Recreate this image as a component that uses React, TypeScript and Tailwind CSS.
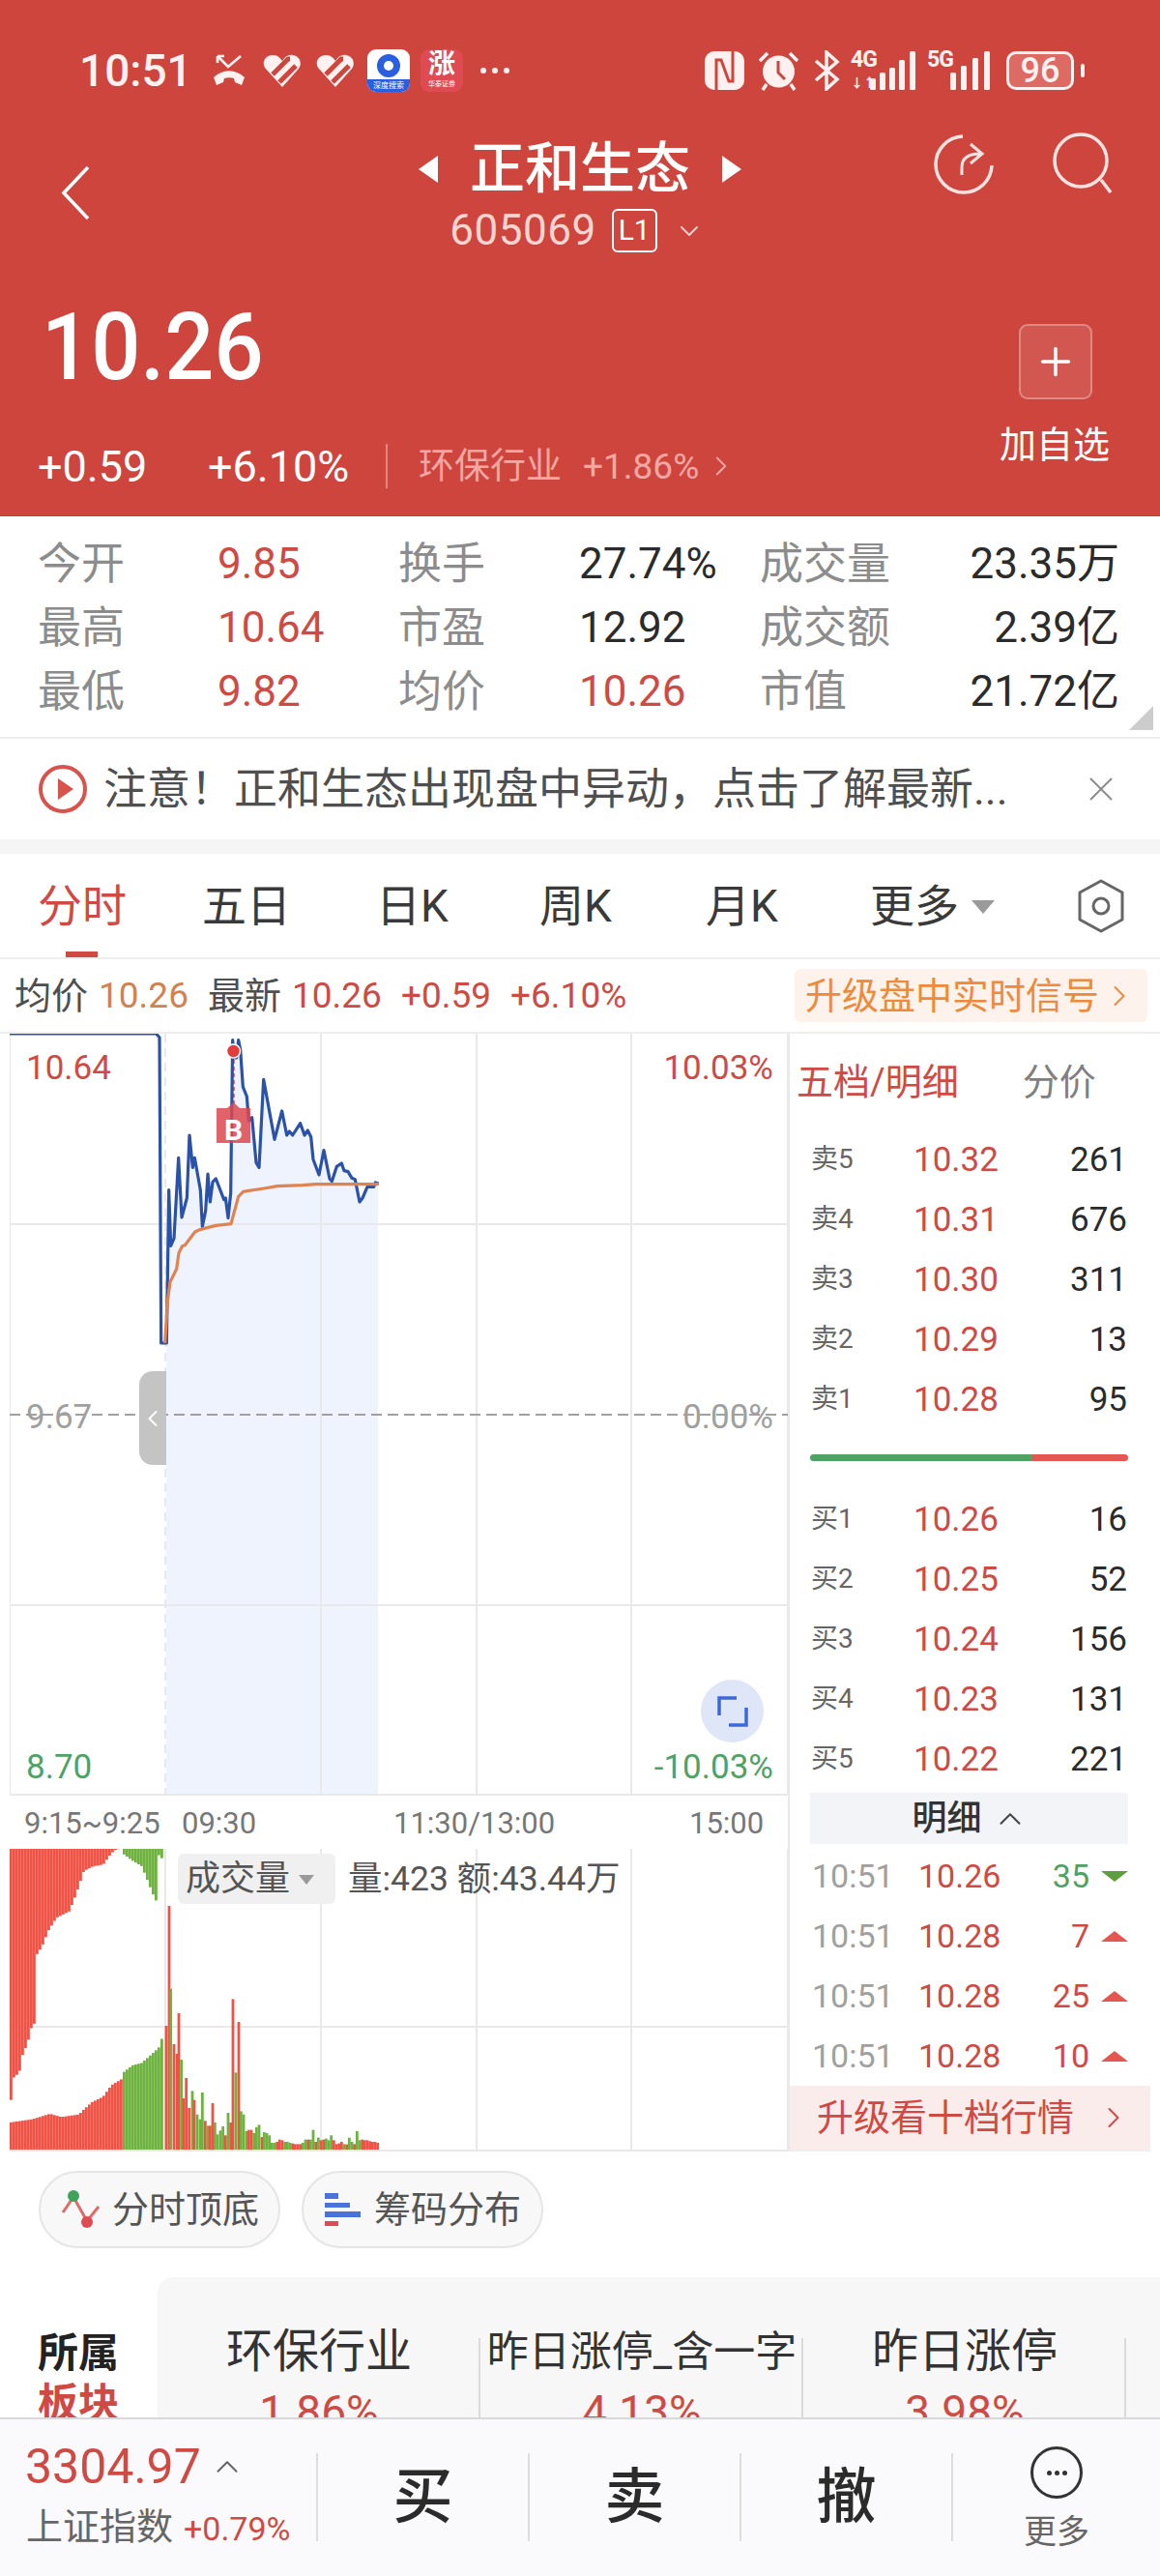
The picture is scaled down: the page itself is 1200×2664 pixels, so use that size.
import React from 'react';
import { ChevronLeft, ChevronRight, ChevronDown, ChevronUp, Plus, X } from 'lucide-react';

// chart coordinates were read off zoomed crops, (x, y) in crop pixels
const toPage = (pts: number[][]) => pts.map(([x, y]) => [140 + x / 3, 1060 + y / 3]);
const str = (pts: number[][]) => pts.map((p) => p.join(',')).join(' ');

const priceLine = toPage([
  [-390, 30], [65, 30], [75, 42], [80, 990], [97, 990], [104, 515], [110, 688], [120, 665], [134, 415], [144, 600],
  [160, 540], [168, 345], [178, 445], [184, 415], [202, 515], [208, 628], [218, 580], [225, 465], [232, 552], [240, 490],
  [250, 480], [275, 545], [280, 540], [288, 602], [296, 525], [302, 50], [308, 105], [314, 105], [320, 50], [326, 80], [334, 195],
  [346, 225], [352, 300], [362, 290], [375, 430], [384, 445], [398, 172], [432, 358], [455, 270], [470, 345], [478, 333],
  [488, 345], [512, 308], [525, 345], [535, 330], [545, 350], [552, 420], [570, 468], [585, 392], [603, 480], [610, 488],
  [625, 442], [640, 432], [648, 455], [660, 458], [672, 478], [682, 482], [696, 552], [705, 540], [720, 505], [740, 505],
  [745, 492], [755, 495],
]);
const avgLine = toPage([
  [92, 990], [100, 860], [108, 800], [128, 760], [135, 710], [145, 690], [155, 685], [185, 645], [200, 638], [250, 625],
  [297, 620], [305, 590], [320, 535], [335, 520], [400, 510], [440, 503], [520, 500], [560, 497], [755, 497],
]);

const interp = (env: number[][], x: number) => {
  for (let i = 1; i < env.length; i++) {
    if (x <= env[i][0]) {
      const [x0, y0] = env[i - 1];
      const [x1, y1] = env[i];
      return y0 + ((y1 - y0) * (x - x0)) / (x1 - x0);
    }
  }
  return env[env.length - 1][1];
};

const topEnv = [[30, 815], [36, 815], [38, 750], [60, 730], [70, 675], [85, 640], [100, 580], [108, 578], [110, 370], [130, 340], [150, 290], [175, 250], [215, 230], [235, 180], [260, 105], [290, 90], [320, 85], [345, 50], [360, 38], [378, 35], [380, 50], [410, 72], [440, 90], [460, 140], [480, 190], [490, 205], [492, 50], [498, 85], [505, 50]];
const bottomEnv = [[30, 885], [100, 875], [155, 858], [190, 868], [245, 860], [260, 845], [285, 822], [320, 805], [345, 770], [378, 750], [380, 732], [410, 708], [440, 700], [480, 665], [495, 650], [505, 615]];

// one bar every 3px in the pre-market part
const preBars = Array.from({ length: 53 }, (_, i) => 10 + i * 3);

const volBars: [number, string, number][] = [
  [516, 'r', 585], [525, 'r', 213], [530, 'g', 470], [540, 'r', 642], [550, 'r', 672], [555, 'r', 546], [563, 'g', 690], [570, 'r', 810], [578, 'r', 747], [587, 'r', 840],
  [597, 'g', 787], [603, 'r', 815], [612, 'g', 860], [621, 'g', 875], [628, 'g', 792], [637, 'r', 880], [645, 'g', 895], [652, 'r', 895], [660, 'r', 825], [667, 'g', 885],
  [675, 'g', 922], [684, 'g', 910], [692, 'g', 897], [700, 'r', 925], [708, 'g', 855], [716, 'r', 885], [723, 'r', 502], [732, 'g', 730], [741, 'r', 573], [748, 'g', 850],
  [756, 'g', 860], [765, 'g', 912], [772, 'r', 908], [780, 'r', 908], [788, 'g', 918], [796, 'g', 900], [804, 'g', 892], [813, 'r', 930], [820, 'g', 915], [828, 'g', 918],
  [836, 'g', 925], [844, 'g', 948], [852, 'g', 948], [860, 'r', 945], [868, 'r', 938], [876, 'r', 940], [884, 'g', 945], [892, 'g', 945], [900, 'g', 948], [908, 'r', 950],
  [916, 'r', 952], [924, 'r', 952], [932, 'r', 952], [940, 'g', 948], [948, 'g', 938], [956, 'r', 938], [964, 'g', 938], [972, 'g', 908], [980, 'r', 945], [988, 'g', 932],
  [996, 'r', 940], [1004, 'r', 938], [1012, 'g', 935], [1020, 'g', 940], [1028, 'g', 925], [1036, 'r', 940], [1044, 'r', 952], [1052, 'r', 950], [1060, 'r', 945], [1068, 'g', 952],
  [1076, 'r', 953], [1084, 'g', 932], [1092, 'g', 945], [1100, 'r', 952], [1108, 'g', 912], [1116, 'g', 940], [1124, 'r', 938], [1132, 'r', 940], [1140, 'r', 940], [1148, 'r', 943],
  [1156, 'r', 945], [1164, 'r', 945], [1172, 'r', 948],
];

const RED = '#F05245';
const GREEN = '#6EB23F';

const stats = [
  ['今开', '9.85', '换手', '27.74%', '成交量', '23.35万'],
  ['最高', '10.64', '市盈', '12.92', '成交额', '2.39亿'],
  ['最低', '9.82', '均价', '10.26', '市值', '21.72亿'],
];

const sells = [['卖5', '10.32', '261'], ['卖4', '10.31', '676'], ['卖3', '10.30', '311'], ['卖2', '10.29', '13'], ['卖1', '10.28', '95']];
const buys = [['买1', '10.26', '16'], ['买2', '10.25', '52'], ['买3', '10.24', '156'], ['买4', '10.23', '131'], ['买5', '10.22', '221']];
const ticks = [['10.26', '35', true], ['10.28', '7', false], ['10.28', '25', false], ['10.28', '10', false]] as const;

const StatusLeft = () => (
  <div className="flex items-center">
    <span className="ml-[82px] w-[135px] text-[46px] font-medium leading-none text-[#FFF1EF]">10:51</span>
    <svg width="40" height="34" viewBox="0 0 40 34" className="shrink-0">
      <path d="M4 16 C14 7 26 7 36 16 L33 24 L26 21 L25 17 C22 16 18 16 15 17 L14 21 L7 24 Z" fill="#FFF1EF" transform="translate(0 8)" />
      <path d="M8 2 L19 13 L32 2 M8 2 H15 M8 2 V9" fill="none" stroke="#FFF1EF" strokeWidth="2.6" />
    </svg>
    {[0, 1].map((i) => (
      <svg key={i} width="40" height="36" viewBox="0 0 40 36" className="ml-[15px] shrink-0">
        <path d="M20 35 L2 15 C-2 8 4 1 11 2 C15 2 18 5 20 8 C23 3 27 1 31 2 C38 3 41 10 37 16 Z" fill="#FFF1EF" />
        <path d="M10 22 L26 6 L28 6 M17 30 L34 13" stroke="#CE453E" strokeWidth="5" fill="none" />
      </svg>
    ))}
    <div className="relative ml-[13px] flex h-[44px] w-[44px] flex-col items-center overflow-hidden rounded-[9px] bg-white">
      <div className="mt-[5px] h-[24px] w-[24px] rounded-full border-[7px] border-[#2A5FE0]" />
      <div className="absolute bottom-0 flex h-[13px] w-full items-center justify-center bg-[#2A5FE0] text-[8px] leading-none whitespace-nowrap text-white">深度搜索</div>
    </div>
    <div className="ml-[11px] flex h-[44px] w-[44px] flex-col items-center rounded-[9px] bg-[#DF4B52] text-white">
      <span className="text-[28px] leading-[32px] font-bold">涨</span>
      <span className="text-[7px] leading-[8px] whitespace-nowrap">华泰证券</span>
    </div>
    <div className="ml-[18px] flex gap-[6px]">
      <span className="h-[6px] w-[6px] rounded-full bg-[#FFF1EF]" />
      <span className="h-[6px] w-[6px] rounded-full bg-[#FFF1EF]" />
      <span className="h-[6px] w-[6px] rounded-full bg-[#FFF1EF]" />
    </div>
  </div>
);

const Signal = ({ label, arrows }: { label: string; arrows?: boolean }) => (
  <div className="relative h-[40px] w-[68px] shrink-0">
    <span className="absolute top-[-3px] left-0 text-[23px] leading-[24px] font-bold tracking-[-1px] text-[#FFF1EF]">{label}</span>
    {arrows && <span className="absolute bottom-[1px] left-0 text-[13px] leading-none font-bold text-[#FFF1EF]">↓↑</span>}
    <svg width="68" height="40" viewBox="0 0 68 40" className="absolute inset-0">
      {(arrows
        ? [[20, 28, 6, 12], [30, 22, 6, 18], [40, 17, 6, 23], [50, 9, 6, 31], [61, 0, 6, 40]]
        : [[24, 22, 6, 18], [35, 15, 6, 25], [47, 7, 6, 33], [59, 0, 6, 40]]
      ).map(([x, y, w, h]) => (
        <rect key={x} x={x} y={y} width={w} height={h} rx="1.5" fill="#FFF1EF" />
      ))}
    </svg>
  </div>
);

const StatusRight = () => (
  <div className="flex items-center">
    <svg width="41" height="40" viewBox="0 0 41 40" className="shrink-0">
      <rect width="41" height="40" rx="10" fill="#FFF1EF" />
      <path d="M12 40 V9 H17 L25 31 H29 V0" fill="none" stroke="#CE453E" strokeWidth="3" />
    </svg>
    <svg width="41" height="42" viewBox="0 0 41 42" className="ml-[15px] shrink-0">
      <circle cx="20.5" cy="22" r="16.5" fill="#FFF1EF" />
      <path d="M20 11 V23 L27 30" fill="none" stroke="#CE453E" strokeWidth="3" />
      <path d="M1 11 L9 3 M40 11 L32 3 M8 35 L4 41 M33 35 L37 41" stroke="#FFF1EF" strokeWidth="3.5" />
    </svg>
    <svg width="28" height="42" viewBox="0 0 28 42" className="ml-[15px] shrink-0">
      <path d="M3 11 L25 30 L14 40 V2 L25 12 L3 31" fill="none" stroke="#FFF1EF" strokeWidth="3.5" />
    </svg>
    <div className="ml-[11px]">
      <Signal label="4G" arrows />
    </div>
    <div className="ml-[11px]">
      <Signal label="5G" />
    </div>
    <div className="ml-[14px] flex h-[40px] w-[70px] items-center justify-center rounded-[10px] border-[3px] border-[#FFF1EF] bg-[#DE6A64] text-[36px] leading-none font-medium text-[#FFF1EF]">
      96
    </div>
    <div className="ml-[7px] h-[14px] w-[4px] rounded-full bg-[#FFF1EF]" />
  </div>
);

const Header = () => (
  <div className="flex h-[534px] flex-col bg-[#CE453E] text-white">
    <div className="mt-[47px] flex h-[52px] items-center justify-between pr-[78px]">
      <StatusLeft />
      <StatusRight />
    </div>
    <div className="relative mt-[40px] flex h-[125px] flex-col items-center">
      <svg width="31" height="57" viewBox="0 0 31 57" className="absolute top-[32px] left-[63px]" fill="none" stroke="#FFFFFF" strokeWidth="3.5">
        <path d="M28 2 L3 28.5 L28 55" />
      </svg>
      <div className="flex items-center">
        <span className="h-0 w-0 border-y-[14px] border-r-[20px] border-y-transparent border-r-white" />
        <span className="mx-[33px] text-[57px] leading-[72px] font-medium">正和生态</span>
        <span className="h-0 w-0 border-y-[14px] border-l-[20px] border-y-transparent border-l-white" />
      </div>
      <div className="mt-[4px] ml-[-6px] flex items-center text-[#FBD5D1]">
        <span className="text-[44px] leading-[46px] tracking-[0.5px]">605069</span>
        <span className="ml-[16px] flex h-[45px] w-[47px] items-center justify-center rounded-[6px] border-2 border-white text-[30px] leading-none text-white">L1</span>
        <ChevronDown className="mt-[2px] ml-[17px] text-[#FBD5D1]" size={32} strokeWidth={1.8} absoluteStrokeWidth />
      </div>
      <svg width="64" height="66" viewBox="0 0 64 66" className="absolute top-[-2px] left-[966px]" fill="none" stroke="#FBE3E1" strokeWidth="3.5">
        <path d="M30 4 A29 29 0 1 0 60 34" />
        <path d="M29 44 V36 C29 26 36 22 48 22 M38 12 L50 22 L38 32" strokeWidth="3" />
      </svg>
      <svg width="64" height="66" viewBox="0 0 64 66" className="absolute top-[-3px] left-[1089px]" fill="none" stroke="#FBE3E1" strokeWidth="3.5">
        <circle cx="29" cy="30" r="27" />
        <path d="M50 50 L60 63" />
      </svg>
    </div>
    <div className="relative flex-1">
      <span className="absolute top-[45px] left-[43px] origin-bottom scale-y-[1.08] text-[90px] leading-[110px] font-medium">10.26</span>
      <div className="absolute top-[71px] left-[1054px] flex h-[78px] w-[76px] items-center justify-center rounded-[9px] border-2 border-white/30 bg-white/10">
        <Plus size={46} strokeWidth={3.5} absoluteStrokeWidth />
      </div>
      <span className="absolute top-[171px] left-[1034px] text-[38px] leading-[50px]">加自选</span>
      <div className="absolute top-[195px] left-[39px] flex h-[46px] items-center">
        <span className="w-[176px] text-[45px] leading-none">+0.59</span>
        <span className="w-[184px] text-[45px] leading-none">+6.10%</span>
        <span className="h-[46px] w-[2px] bg-[#E58882]" />
        <span className="ml-[32px] text-[37px] leading-none text-[#F3A7A2]">环保行业</span>
        <span className="ml-[22px] text-[37px] leading-none text-[#F3A7A2]">+1.86%</span>
        <ChevronRight className="ml-[6px] text-[#F3A7A2]" size={34} strokeWidth={1.8} absoluteStrokeWidth />
      </div>
    </div>
  </div>
);

const Stats = () => (
  <div className="relative h-[230px] border-b-2 border-[#EEEEEE] bg-white pt-[16px]">
    {stats.map((r) => (
      <div key={r[0]} className="grid h-[66px] grid-cols-[186px_187px_187px_187px_auto_1fr] items-center pr-[42px] pl-[39px] text-[44px] leading-none">
        <span className="text-[45px] text-[#8C8C8C]">{r[0]}</span>
        <span className="text-[#D04A44]">{r[1]}</span>
        <span className="text-[45px] text-[#8C8C8C]">{r[2]}</span>
        <span className={r[3] === '10.26' ? 'text-[#D04A44]' : 'text-[#2B2B2B]'}>{r[3]}</span>
        <span className="text-[45px] text-[#8C8C8C]">{r[4]}</span>
        <span className="text-right text-[#2B2B2B]">{r[5]}</span>
      </div>
    ))}
    <span className="absolute right-[7px] bottom-[7px] h-0 w-0 border-b-[25px] border-l-[25px] border-b-[#CCCCCC] border-l-transparent" />
  </div>
);

const Notice = () => (
  <div className="flex h-[104px] items-center bg-white pl-[40px]">
    <span className="flex h-[50px] w-[50px] items-center justify-center rounded-full border-[4px] border-[#D9534D]">
      <span className="ml-[5px] h-0 w-0 border-y-[11px] border-l-[16px] border-y-transparent border-l-[#D9534D]" />
    </span>
    <span className="ml-[17px] w-[975px] text-[45px] leading-none whitespace-nowrap text-[#4F4F4F]">注意！正和生态出现盘中异动，点击了解最新...</span>
    <X className="ml-[36px] text-[#8C8C8C]" size={42} strokeWidth={2} absoluteStrokeWidth />
  </div>
);

const Tabs = () => (
  <div className="relative flex h-[109px] items-center border-b-2 border-[#EEEEEE] bg-white text-[46px] leading-none text-[#3A3A3A]">
    <span className="absolute left-[39px] text-[#D04A44]">分时</span>
    <span className="absolute top-[101px] left-[68px] h-[6px] w-[33px] bg-[#D04A44]" />
    <span className="absolute left-[209px]">五日</span>
    <span className="absolute left-[389px]">日K</span>
    <span className="absolute left-[558px]">周K</span>
    <span className="absolute left-[730px]">月K</span>
    <span className="absolute left-[900px]">更多</span>
    <span className="absolute left-[1005px] mt-[2px] h-0 w-0 border-x-[12px] border-t-[14px] border-x-transparent border-t-[#9A9A9A]" />
    <svg width="50" height="56" viewBox="0 0 50 56" className="absolute left-[1114px]" fill="none" stroke="#666" strokeWidth="3">
      <path d="M25 2 L47 14 V42 L25 54 L3 42 V14 Z" strokeLinejoin="round" />
      <circle cx="25" cy="28" r="8" />
    </svg>
  </div>
);

const InfoLine = () => (
  <div className="flex h-[77px] items-center border-b-2 border-[#EEEEEE] bg-white pl-[15px] text-[37px] leading-none whitespace-nowrap">
    <span className="text-[38px] text-[#4F4F4F]">均价</span>
    <span className="ml-[11px] text-[#D2824F]">10.26</span>
    <span className="ml-[20px] text-[38px] text-[#4F4F4F]">最新</span>
    <span className="ml-[11px] text-[#D04A44]">10.26</span>
    <span className="ml-[20px] text-[#D04A44]">+0.59</span>
    <span className="ml-[20px] text-[#D04A44]">+6.10%</span>
    <div className="mr-[13px] ml-auto flex h-[55px] w-[365px] items-center rounded-[6px] bg-[#FDF3EC] pl-[11px] text-[38px] text-[#EE8A3C]">
      升级盘中实时信号
      <ChevronRight className="ml-[3px]" size={36} strokeWidth={2} absoluteStrokeWidth />
    </div>
  </div>
);

const PriceChart = () => {
  const fillPts = priceLine.filter(([x]) => x >= 172);
  return (
    <div className="relative h-[789px] text-[35px] leading-none">
      <svg width="805" height="789" viewBox="10 1070 805 789" className="absolute inset-0">
        <rect x="172" y="1070" width="219" height="788" fill="#EEF3FD" />
        <polygon points={`172,1070 ${str(fillPts)} 391,1070`} fill="#FFFFFF" />
        <g stroke="#E9E9EC" strokeWidth="2">
          <path d="M10 1070 V1858 M332 1070 V1858 M493 1070 V1858 M653 1070 V1858 M815 1070 V1858 M10 1267 H815 M10 1661 H815 M10 1857 H815" />
          <path d="M171 1070 V1858" strokeDasharray="9 6" />
        </g>
        <path d="M10 1464 H815" stroke="#A0A0A0" strokeWidth="2" strokeDasharray="11 6" />
        <path d="M241.5 1090 V1145" stroke="#E0555A" strokeWidth="2.5" strokeDasharray="4 3" />
        <polyline points={str(priceLine)} fill="none" stroke="#2A52A8" strokeWidth="3.2" strokeLinejoin="round" />
        <polyline points={str(avgLine)} fill="none" stroke="#E2824F" strokeWidth="3.2" strokeLinejoin="round" />
        <path d="M224 1147 H235 L241.5 1141 L248 1147 H259 V1183 H224 Z" fill="#DC4650" fillOpacity="0.85" />
        <circle cx="241.5" cy="1088" r="7" fill="#E23C3C" stroke="#FFF" strokeWidth="1.5" />
      </svg>
      <span className="absolute top-[85px] left-[213px] flex w-[37px] justify-center text-[30px] font-bold text-white">B</span>
      <span className="absolute top-[18px] left-[17px] text-[#D04A44]">10.64</span>
      <span className="absolute top-[18px] right-[15px] text-[#D04A44]">10.03%</span>
      <span className="absolute top-[379px] left-[17px] text-[#A0A0A0]">9.67</span>
      <span className="absolute top-[379px] right-[15px] text-[#A0A0A0]">0.00%</span>
      <span className="absolute bottom-[13px] left-[17px] text-[#4FA264]">8.70</span>
      <span className="absolute right-[15px] bottom-[13px] text-[#4FA264]">-10.03%</span>
      <div className="absolute top-[349px] left-[134px] flex h-[97px] w-[28px] items-center justify-center rounded-l-[14px] bg-[#C4C4C4] text-white">
        <ChevronLeft size={36} strokeWidth={2.5} absoluteStrokeWidth />
      </div>
      <div className="absolute top-[668px] left-[715px] flex h-[65px] w-[65px] items-center justify-center rounded-full bg-[#DFE6F8]">
        <svg width="32" height="32" viewBox="0 0 32 32" fill="none" stroke="#3D68D8" strokeWidth="3.5">
          <path d="M2 20 V2 H20 M30 12 V30 H12" />
        </svg>
      </div>
    </div>
  );
};

const VolumeChart = () => (
  <div className="relative h-[313px]">
    <svg width="805" height="313" viewBox="10 1912 805 313" className="absolute inset-0">
      <path d="M332 1912 V2224 M493 1912 V2224 M653 1912 V2224 M815 1912 V2224 M171 1912 V2224 M10 2096 H815 M10 2224 H815" stroke="#E9E9EC" strokeWidth="2" />
      {preBars.map((x) => {
        const color = x < 126 ? RED : GREEN;
        const t = 1900 + interp(topEnv, x * 3 + 4) / 3;
        const b = 1900 + interp(bottomEnv, x * 3 + 4) / 3;
        return (
          <g key={x} fill={color}>
            <rect x={x} y={1912} width={2.8} height={Math.max(0, t - 1912)} />
            <rect x={x} y={b} width={2.8} height={2223 - b} />
          </g>
        );
      })}
      {volBars.map(([x, c, y]) => (
        <rect key={x} x={x / 3 - 1.4} y={1900 + y / 3} width={2.8} height={2223 - (1900 + y / 3)} fill={c === 'r' ? RED : GREEN} />
      ))}
    </svg>
    <div className="absolute top-[5px] left-[174px] flex h-[52px] w-[163px] items-center rounded-[6px] bg-[#F0F0F0] pl-[8px] text-[36px] leading-none text-[#555]">
      成交量
      <span className="mt-[2px] ml-[9px] h-0 w-0 border-x-[8px] border-t-[10px] border-x-transparent border-t-[#9A9A9A]" />
    </div>
    <span className="absolute top-[14px] left-[350px] text-[35.5px] leading-none whitespace-nowrap text-[#555]">量:423 额:43.44万</span>
  </div>
);

const TimeAxis = () => (
  <div className="relative flex h-[54px] items-center text-[31px] leading-none text-[#777]">
    <span className="absolute left-[15px]">9:15~9:25</span>
    <span className="absolute left-[178px]">09:30</span>
    <span className="absolute left-[397px]">11:30/13:00</span>
    <span className="absolute left-[703px]">15:00</span>
  </div>
);

const BookRow = ({ r }: { r: string[] }) => (
  <div className="flex h-[62px] items-center">
    <span className="w-[128px] pl-[22px] text-[28px] leading-none text-[#666]">{r[0]}</span>
    <span className="flex-1 text-[35px] leading-none text-[#D04A44]">{r[1]}</span>
    <span className="pr-[24px] text-[35px] leading-none text-[#2B2B2B]">{r[2]}</span>
  </div>
);

const OrderBook = () => (
  <div className="flex w-[375px] flex-col border-l-2 border-[#E9E9EC]">
    <div className="flex h-[99px] items-center pl-[7px] text-[38px] leading-none">
      <span className="text-[#D04A44]">五档/明细</span>
      <span className="ml-[66px] text-[#808080]">分价</span>
    </div>
    {sells.map((r) => (
      <BookRow key={r[0]} r={r} />
    ))}
    <div className="mt-[26px] mr-[23px] ml-[21px] flex h-[7px] overflow-hidden rounded-full">
      <div className="w-[230px] bg-[#4FA264]" />
      <div className="flex-1 bg-[#E45750]" />
    </div>
    <div className="h-[29px]" />
    {buys.map((r) => (
      <BookRow key={r[0]} r={r} />
    ))}
    <div className="mt-[4px] mr-[23px] ml-[21px] flex h-[53px] items-center justify-center bg-[#F2F4F8] pl-[2px] text-[36px] leading-none font-medium text-[#333]">
      明细
      <ChevronUp className="ml-[10px] text-[#444]" size={38} strokeWidth={2} absoluteStrokeWidth />
    </div>
    <div className="h-[2px]" />
    {ticks.map(([price, vol, down], i) => (
      <div key={i} className="relative flex h-[62px] items-center text-[34px] leading-none">
        <span className="ml-[23px] w-[110px] text-[#A0A0A0]">10:51</span>
        <span className="text-[#D04A44]">{price}</span>
        <span className={`absolute right-[63px] ${down ? 'text-[#4FA264]' : 'text-[#D04A44]'}`}>{vol}</span>
        {down ? (
          <span className="absolute right-[23px] h-0 w-0 border-x-[14px] border-t-[11px] border-x-transparent border-t-[#5F9E3F]" />
        ) : (
          <span className="absolute right-[23px] h-0 w-0 border-x-[14px] border-b-[11px] border-x-transparent border-b-[#E45750]" />
        )}
      </div>
    ))}
    <div className="flex h-[68px] items-center justify-between border-b-2 border-[#EEEEEE] bg-[#FBECEC] pr-[20px] pl-[28px] text-[38px] leading-none whitespace-nowrap text-[#D04A44]">
      升级看十档行情
      <ChevronRight size={36} strokeWidth={2} absoluteStrokeWidth />
    </div>
  </div>
);

const Chips = () => (
  <div className="flex h-[130px] items-start gap-[22px] pt-[20px] pl-[40px] text-[38px] leading-none text-[#555]">
    <div className="flex h-[80px] w-[250px] items-center rounded-full border-2 border-[#E5E5E5] bg-[#F8F8F8] pl-[20px]">
      <svg width="42" height="42" viewBox="0 0 42 42" fill="none" className="mr-[12px] shrink-0">
        <path d="M3 24 L14 8 L28 33 L40 18" stroke="#DF6A66" strokeWidth="3" />
        <circle cx="14" cy="7" r="6" fill="#3FA35C" />
        <circle cx="28" cy="34" r="6" fill="#DF4B52" />
      </svg>
      分时顶底
    </div>
    <div className="flex h-[80px] w-[250px] items-center rounded-full border-2 border-[#E5E5E5] bg-[#F8F8F8] pl-[22px]">
      <svg width="38" height="34" viewBox="0 0 38 34" className="mr-[13px] shrink-0">
        <rect x="0" y="0" width="14" height="6" fill="#4A73D9" />
        <rect x="0" y="10" width="26" height="5" fill="#4A73D9" />
        <rect x="0" y="19" width="37" height="6" fill="#4A73D9" />
        <rect x="0" y="29" width="14" height="5" fill="#DF4B52" />
      </svg>
      筹码分布
    </div>
  </div>
);

const Sector = ({ name, pct, small }: { name: string; pct: string; small?: boolean }) => (
  <div className="relative flex w-[334px] shrink-0 flex-col items-center">
    <span className={small ? 'mt-[46px] h-[62px] text-[43px] leading-[62px] whitespace-nowrap text-[#333]' : 'mt-[46px] h-[62px] text-[48px] leading-[62px] text-[#333]'}>{name}</span>
    <span className="mt-[6px] text-[46px] leading-[50px] text-[#D04A44]">{pct}</span>
    <span className="absolute top-[63px] right-0 h-[90px] w-[2px] bg-[#DADADA]" />
  </div>
);

const Plates = () => (
  <div className="flex h-[145px] overflow-hidden">
    <div className="flex w-[163px] shrink-0 flex-col pt-[53px] pl-[39px] text-[42px] leading-[52px] font-bold">
      <span className="text-[#222]">所属</span>
      <span className="text-[#D04A44]">板块</span>
    </div>
    <div className="flex flex-1 rounded-tl-[16px] bg-[#F7F7F7]">
      <Sector name="环保行业" pct="1.86%" />
      <Sector name="昨日涨停_含一字" pct="4.13%" small />
      <Sector name="昨日涨停" pct="3.98%" />
    </div>
  </div>
);

const BottomBar = () => (
  <div className="flex h-[164px] border-t-2 border-[#D8D8DC] bg-[#FAFAFC]">
    <div className="relative w-[327px] shrink-0">
      <span className="absolute top-[24px] left-[26px] text-[50px] leading-none text-[#D04A44]">3304.97</span>
      <ChevronUp className="absolute top-[30px] left-[216px] text-[#666]" size={38} strokeWidth={2} absoluteStrokeWidth />
      <span className="absolute top-[92px] left-[27px] text-[38px] leading-none text-[#666]">上证指数</span>
      <span className="absolute top-[96px] left-[190px] text-[34px] leading-none text-[#D04A44]">+0.79%</span>
    </div>
    {['买', '卖', '撤'].map((t) => (
      <div key={t} className="mt-[35px] flex h-[91px] w-[219px] items-center justify-center border-l-2 border-[#DDDDDD] text-[62px] leading-none font-medium text-[#2B2B2B]">
        {t}
      </div>
    ))}
    <div className="mt-[35px] flex h-[91px] flex-1 flex-col items-center border-l-2 border-[#DDDDDD]">
      <span className="mt-[-7px] flex h-[54px] w-[54px] shrink-0 items-center justify-center gap-[3px] rounded-full border-[3px] border-[#333]">
        <span className="h-[5px] w-[5px] rounded-full bg-[#333]" />
        <span className="h-[5px] w-[5px] rounded-full bg-[#333]" />
        <span className="h-[5px] w-[5px] rounded-full bg-[#333]" />
      </span>
      <span className="mt-[17px] shrink-0 text-[34px] leading-none text-[#666]">更多</span>
    </div>
  </div>
);

export default function App() {
  return (
    <div className="h-[2664px] w-[1200px] overflow-hidden bg-white [font-family:Roboto,'Noto_Sans_CJK_SC',sans-serif]">
      <Header />
      <Stats />
      <Notice />
      <div className="h-[15px] bg-[#F5F5F5]" />
      <Tabs />
      <InfoLine />
      <div className="flex h-[1156px] pr-[10px] pl-[10px]">
        <div className="w-[805px]">
          <PriceChart />
          <TimeAxis />
          <VolumeChart />
        </div>
        <OrderBook />
      </div>
      <Chips />
      <Plates />
      <BottomBar />
    </div>
  );
}
